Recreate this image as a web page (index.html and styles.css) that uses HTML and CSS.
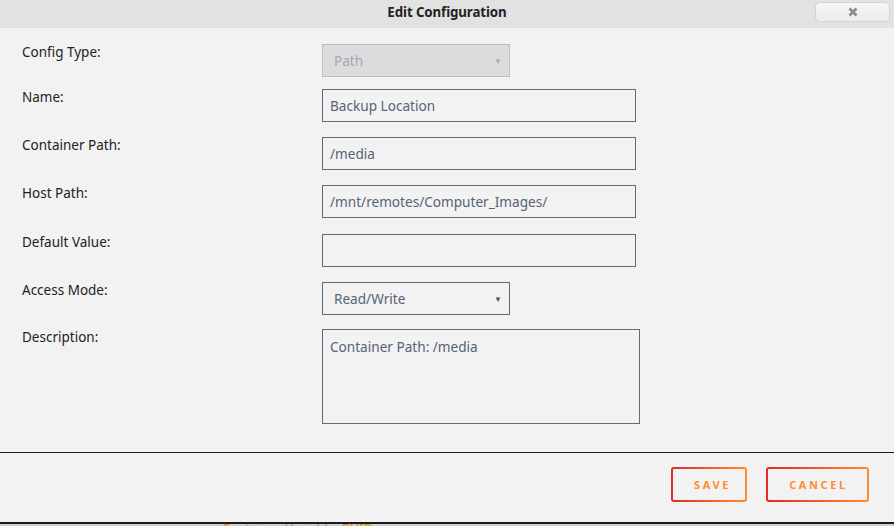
FILE: index.html
```html
<!DOCTYPE html>
<html>
<head>
<meta charset="utf-8">
<link rel="stylesheet" href="styles.css">
</head>
<body>
<div class="dialog">
  <div class="titlebar">
    <span class="title">Edit Configuration</span>
    <button class="close"><svg width="10" height="10" viewBox="0 0 10 10"><path d="M1.5 1.5 L8.5 8.5 M8.5 1.5 L1.5 8.5" stroke="#8a8a8a" stroke-width="2.6" stroke-linecap="butt"/></svg></button>
  </div>
  <div class="content">
    <div class="row r1">
      <label class="lbl">Config Type:</label>
      <div class="select disabled"><span>Path</span><span class="caret">▼</span></div>
    </div>
    <div class="row r2">
      <label class="lbl">Name:</label>
      <div class="input">Backup Location</div>
    </div>
    <div class="row r3">
      <label class="lbl">Container Path:</label>
      <div class="input">/media</div>
    </div>
    <div class="row r4">
      <label class="lbl">Host Path:</label>
      <div class="input">/mnt/remotes/Computer_Images/</div>
    </div>
    <div class="row r5">
      <label class="lbl">Default Value:</label>
      <div class="input"></div>
    </div>
    <div class="row r6">
      <label class="lbl">Access Mode:</label>
      <div class="select"><span>Read/Write</span><span class="caret">▼</span></div>
    </div>
    <div class="row r7">
      <label class="lbl">Description:</label>
      <div class="textarea">Container Path: /media</div>
    </div>
  </div>
  <div class="footer">
    <button class="btn save">SAVE</button>
    <button class="btn cancel">CANCEL</button>
  </div>
</div>
<div class="behind"><span>Container Variable: PUID</span></div>
</body>
</html>
```
FILE: styles.css
```css
* { box-sizing: border-box; }
html, body { margin: 0; padding: 0; }
body {
  width: 894px;
  height: 526px;
  overflow: hidden;
  background: #cfcfcf;
  font-family: "Noto Sans", "Open Sans", sans-serif;
}
.dialog {
  height: 524px;
  background: #f2f2f2;
  border-bottom: 2px solid #1c1c1c;
  display: flex;
  flex-direction: column;
}
.titlebar {
  height: 28px;
  background: #e2e2e2;
  display: flex;
  align-items: center;
  justify-content: center;
  padding-bottom: 4px;
  position: relative;
}
.title {
  font-weight: bold;
  font-size: 13.3px;
  color: #222;
  letter-spacing: -0.1px;
}
.close {
  position: absolute;
  left: 815px;
  top: 2px;
  width: 75px;
  height: 20px;
  border: 1px solid #d4d4d4;
  border-radius: 5px;
  background: linear-gradient(#f6f6f6, #ececec);
  display: flex;
  align-items: center;
  justify-content: center;
  padding: 0;
}
.content {
  flex: 1;
  padding: 16px 0 0 22px;
  border-bottom: 1px solid #1c1c1c;
  display: flex;
  flex-direction: column;
}
.row {
  display: flex;
  align-items: flex-start;
  flex: none;
}
.r1 { height: 45px; }
.r2 { height: 48px; }
.r3 { height: 48px; }
.r4 { height: 49px; }
.r5 { height: 48px; }
.r6 { height: 47px; }
.lbl {
  width: 300px;
  font-size: 13.5px;
  color: #222;
  line-height: 18px;
  margin-top: -1px;
}
.input, .select, .textarea {
  border: 1px solid #5e6c80;
  background: #f2f2f2;
  color: #566476;
  font-size: 13.6px;
  font-family: "Noto Sans", "Open Sans", sans-serif;
  line-height: 31px;
  padding: 0 7px;
}
.input {
  width: 314px;
  height: 33px;
}
.select {
  width: 188px;
  height: 33px;
  display: flex;
  justify-content: space-between;
  padding: 0 7px 0 11px;
}
.select.disabled {
  background: #dcdcde;
  border-color: #bdbdbd;
  color: #a8a8ad;
}
.caret {
  font-size: 8px;
  color: #555;
}
.select.disabled .caret { color: #aaa; }
.textarea {
  width: 318px;
  height: 95px;
  line-height: 18px;
  padding: 8px 7px;
}
.footer {
  height: 69px;
  display: flex;
  justify-content: flex-end;
  align-items: flex-start;
  padding: 14px 25px 0 0;
  gap: 19px;
}
.btn {
  height: 35px;
  border: 2px solid transparent;
  border-radius: 3px;
  background: linear-gradient(#f2f2f2, #f2f2f2) padding-box,
              linear-gradient(90deg, #e22828, #ff8c2f) border-box;
  color: #ff8c2f;
  font-family: "Noto Sans", "Open Sans", sans-serif;
  font-weight: bold;
  font-size: 11px;
  letter-spacing: 2.6px;
  padding: 0 0 0 2px;
}
.save { width: 76px; padding-left: 7px; }
.cancel { width: 103px; }
.behind {
  height: 2px;
  padding-left: 222px;
  font-size: 13px;
  color: #e08a00;
  line-height: 8px;
  overflow: hidden;
}
```
